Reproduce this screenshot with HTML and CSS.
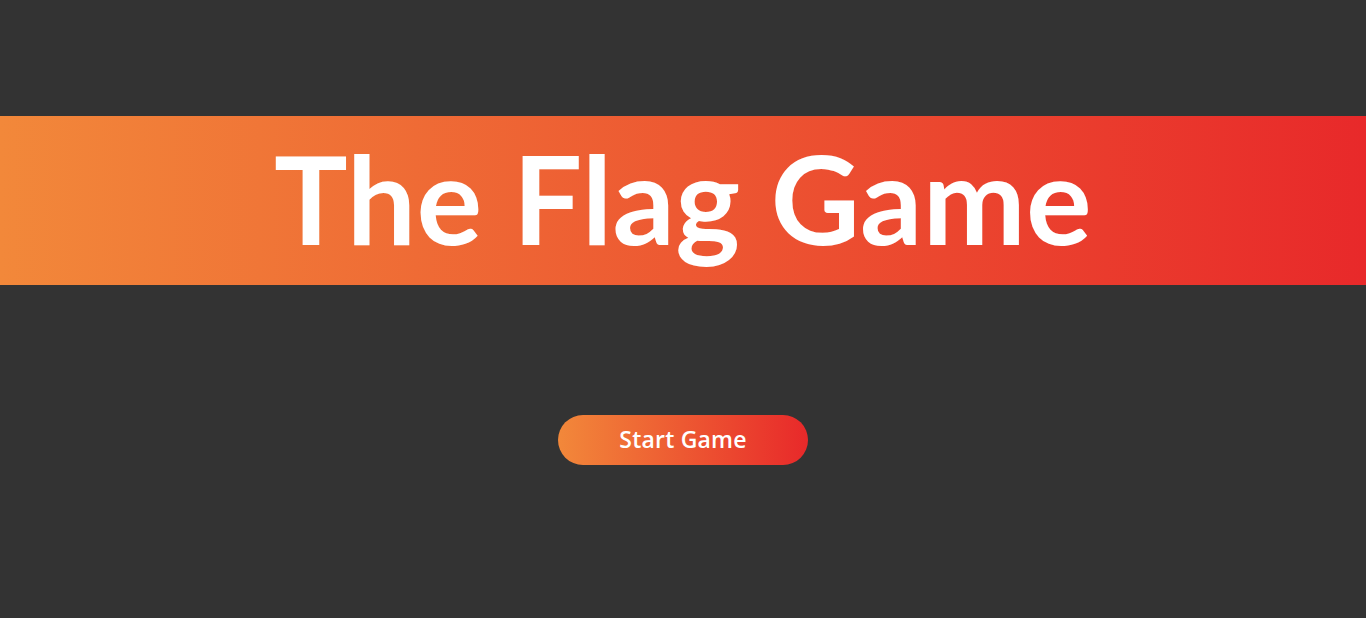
FILE: index.html
```html
<!DOCTYPE html>
<html lang="en">
<head>
<meta charset="utf-8">
<title>The Flag Game</title>
<link rel="stylesheet" href="styles.css">
</head>
<body>
<main class="page">
  <header class="banner">
    <h1 class="title">The Flag Game</h1>
  </header>
  <div class="actions">
    <button class="start-btn" type="button">Start Game</button>
  </div>
</main>
</body>
</html>
```
FILE: styles.css
```css
html, body {
  margin: 0;
  padding: 0;
  background: #333333;
  height: 100%;
}
.page {
  display: flex;
  flex-direction: column;
  padding-top: 116px;
  font-family: "Lato", "Open Sans", sans-serif;
}
.banner {
  height: 169px;
  box-sizing: border-box;
  padding-bottom: 7px;
  background: linear-gradient(90deg, #f2883a 0%, #e8292a 100%);
  display: flex;
  align-items: center;
  justify-content: center;
}
.title {
  margin: 0;
  color: #ffffff;
  font-size: 123px;
  font-weight: 700;
  line-height: 1;
  letter-spacing: 0.3px;
}
.actions {
  display: flex;
  justify-content: center;
  padding-top: 130px;
}
.start-btn {
  width: 250px;
  height: 50px;
  padding: 0 0 3px;
  border: none;
  border-radius: 25px;
  background: linear-gradient(90deg, #f2883a 0%, #e8292a 100%);
  color: #ffffff;
  font-family: "Open Sans", "Lato", sans-serif;
  font-size: 23px;
  font-weight: 600;
  letter-spacing: 0.2px;
  cursor: pointer;
}
```
